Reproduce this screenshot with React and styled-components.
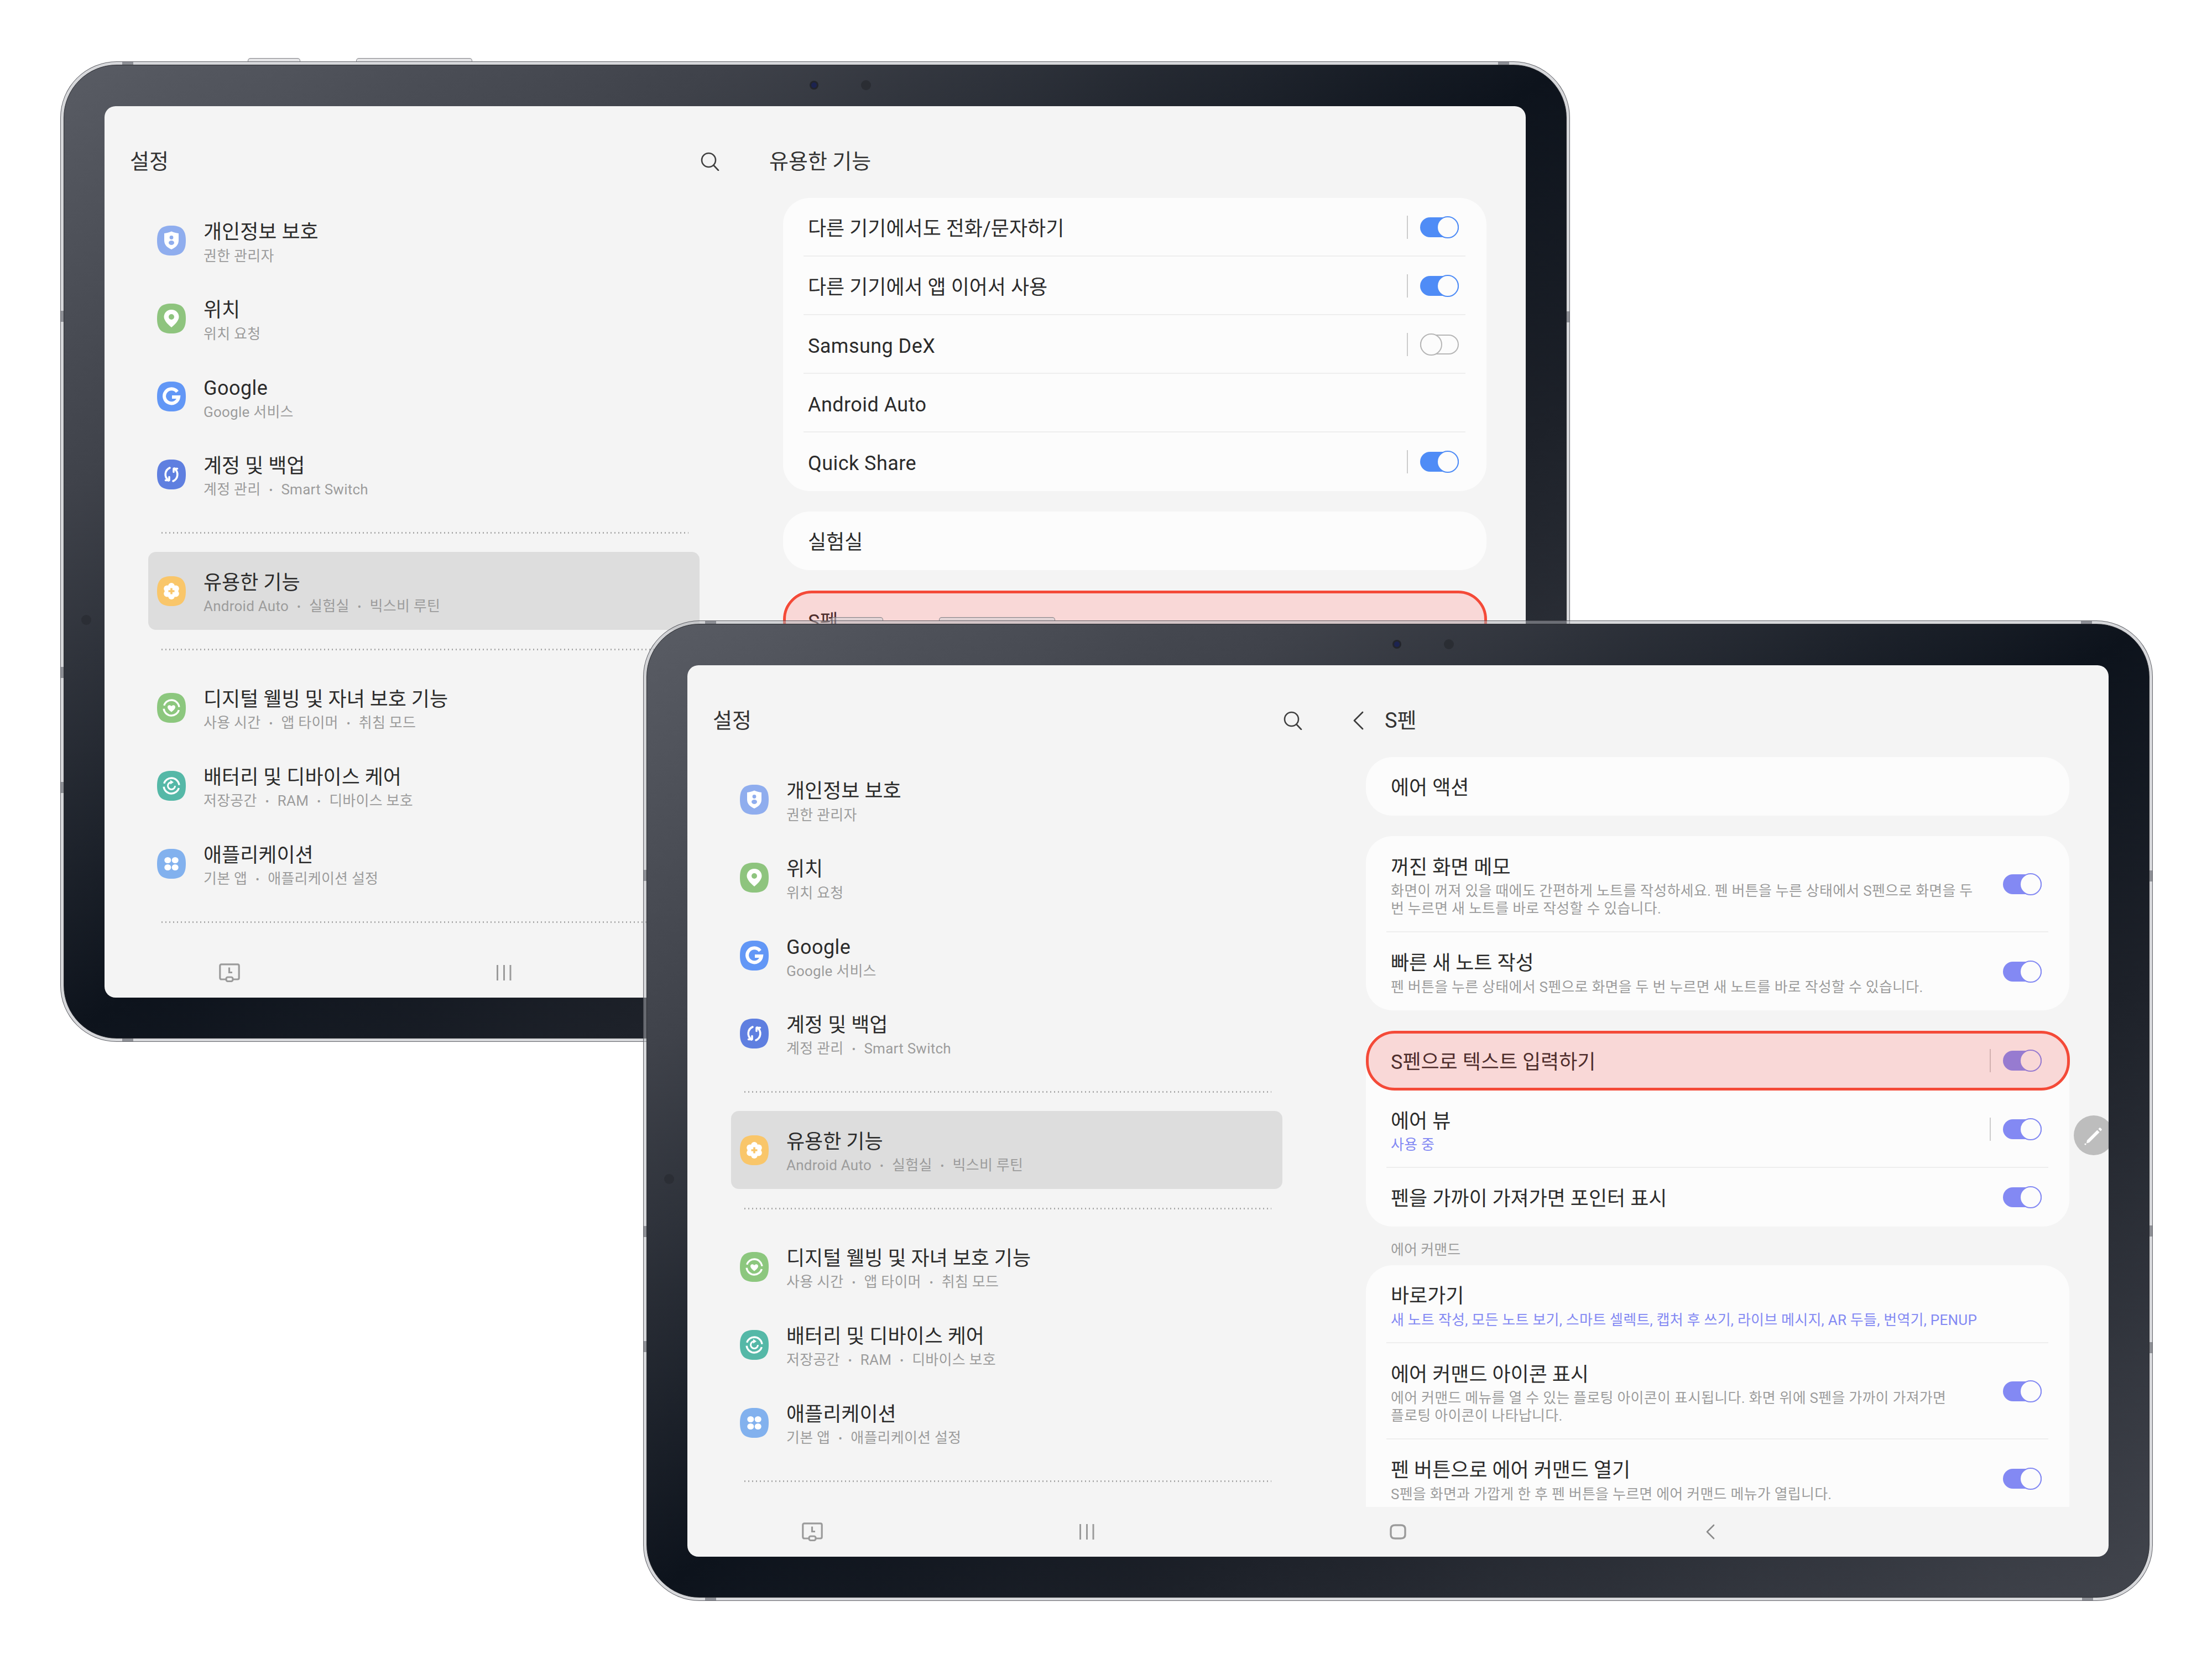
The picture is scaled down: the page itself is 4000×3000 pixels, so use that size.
import React from 'react';
import styled, { createGlobalStyle } from 'styled-components';

const FONT = 'Roboto, "Noto Sans CJK KR", sans-serif';

const Global = createGlobalStyle`
  html, body { margin: 0; padding: 0; background: #fff; }
  * { box-sizing: border-box; }
`;

const Canvas = styled.div`
  position: relative;
  width: 4000px;
  height: 3000px;
  overflow: hidden;
  background: #fff;
  font-family: ${FONT};
`;

const Device = styled.section`
  position: absolute;
  left: ${p => p.$x}px;
  top: ${p => p.$y}px;
  width: 2730px;
  height: 1773px;
  padding: 5px;
  border: 1px solid rgba(60, 62, 68, 0.75);
  border-radius: 102px;
  background: rgba(176, 177, 183, 0.5);
`;

const Body = styled.div`
  position: relative;
  width: 100%;
  height: 100%;
  padding: 74px 73px 73px;
  border-radius: 96px;
  border: 1px solid #2a2c31;
  background: linear-gradient(to bottom right, #595c64 0%, #3f424a 22%, #0d131c 50%, #1d2129 68%, #42454d 100%);
`;

const Screen = styled.div`
  position: relative;
  height: 100%;
  display: grid;
  grid-template-rows: 1522px 90px;
  background: #f4f4f4;
  border-radius: 20px;
  overflow: hidden;
`;

const Main = styled.div`
  display: grid;
  grid-template-columns: 1155px 1fr;
  min-height: 0;
  overflow: hidden;
`;

const Side = styled.aside`
  display: flex;
  flex-direction: column;
`;

const SideHeader = styled.header`
  display: flex;
  align-items: center;
  justify-content: space-between;
  height: 60px;
  margin: 70px 0 42px;
  padding: 0 43px 0 46px;
`;

const PaneHeader = styled.header`
  display: flex;
  align-items: center;
  gap: 37px;
  height: 60px;
  margin: 70px 0 36px -25px;
`;

const Heading = styled.h1`
  margin: 0;
  font-size: 38px;
  line-height: 60px;
  font-weight: 400;
  color: #333;
`;

const MenuList = styled.nav`
  display: flex;
  flex-direction: column;
  margin-left: 79px;
  width: 997px;
`;

const MenuRow = styled.div`
  display: flex;
  align-items: center;
  gap: 32px;
  height: 141px;
  padding-left: 16px;
  border-radius: 14px;
  background: ${p => (p.$active ? '#dddddd' : 'transparent')};
`;

const MenuDivider = styled.div`
  height: 3px;
  margin: 34px 20px 33px 24px;
  background: repeating-linear-gradient(90deg, #a9a9a9 0 2px, transparent 2px 7px);
`;

const TextBlock = styled.div`
  display: flex;
  flex-direction: column;
  padding-top: 6.5px;
  white-space: nowrap;
`;

const Title = styled.div`
  font-size: 36px;
  line-height: 46px;
  color: #2b2b2b;
  letter-spacing: ${p => (p.$latin ? '0.45px' : '0')};
`;

const Sub = styled.div`
  margin-top: 3.5px;
  font-size: 26px;
  line-height: 32px;
  letter-spacing: 0.25px;
  color: ${p => (p.$accent ? '#8389f3' : '#9c9c9c')};
`;

const Bullet = styled.span`
  margin: 0 15px;
  font-size: 20px;
  vertical-align: 1px;
`;

const Pane = styled.div`
  display: flex;
  flex-direction: column;
  padding: 0 71px 0 72px;
`;

const Card = styled.div`
  margin-bottom: ${p => (p.$flush ? 0 : 37)}px;
  padding-bottom: ${p => p.$tail || 0}px;
  background: #fcfcfc;
  border-radius: 48px;
  flex-shrink: 0;
`;

const Row = styled.div`
  position: relative;
  display: flex;
  align-items: center;
  justify-content: space-between;
  height: ${p => p.$h}px;
  padding: 0 50px 0 45px;

  ${p => p.$sep && `
    &::after {
      content: '';
      position: absolute;
      left: 37px;
      right: 38px;
      bottom: 0;
      height: 2px;
      background: #eeeeee;
    }
  `}
`;

const Highlight = styled.div`
  position: absolute;
  inset: 0 -1px 0 0;
  border: 5px solid #f44a38;
  border-radius: 52px;
  background: rgba(238, 66, 58, 0.19);
  pointer-events: none;
`;

const Controls = styled.div`
  display: flex;
  align-items: center;
  gap: 22px;
`;

const VLine = styled.span`
  width: 2px;
  height: 42px;
  background: #cccccc;
`;

const ToggleBox = styled.span`
  position: relative;
  display: flex;
  align-items: center;
  width: 70px;
  height: 42px;
`;

const Track = styled.span`
  width: 100%;
  height: 36px;
  border-radius: 18px;
  background: ${p => (p.$on ? p.$color : 'transparent')};
  border: ${p => (p.$on ? 'none' : '2px solid #b6b6b6')};
`;

const Thumb = styled.span`
  position: absolute;
  top: 1px;
  ${p => (p.$on ? 'right: 0;' : 'left: 0;')}
  width: 40px;
  height: 40px;
  border-radius: 50%;
  background: #fcfcfc;
  border: 2px solid ${p => (p.$on ? p.$color : '#b6b6b6')};
`;

const GroupLabel = styled.div`
  padding: 25px 0 11px 45px;
  font-size: 26px;
  line-height: 34px;
  color: #9c9c9c;
`;

const NavBar = styled.div`
  display: grid;
  grid-template-columns: 452px 540px 586px 544px;
  align-items: center;
  justify-items: center;
`;

const PenBubble = styled.div`
  position: absolute;
  left: 2507px;
  top: 814px;
  width: 72px;
  height: 72px;
  display: flex;
  align-items: center;
  justify-content: center;
  border-radius: 50%;
  background: #bdbdbd;
`;

const TopButton = styled.span`
  position: absolute;
  top: -7px;
  left: ${p => p.$x}px;
  width: ${p => p.$w}px;
  height: 6px;
  border: 1px solid rgba(110, 110, 116, 0.85);
  border-bottom: none;
  border-radius: 5px 5px 0 0;
  background: rgba(205, 205, 210, 0.55);
`;

const Notch = styled.span`
  position: absolute;
  background: #8d8f95;
  ${p => (p.$side === 'top' || p.$side === 'bottom'
    ? `width: 20px; height: 5px; left: ${p.$pos}px; ${p.$side}: 0;`
    : `width: 5px; height: 20px; top: ${p.$pos}px; ${p.$side}: 0;`)}
`;

const Lens = styled.span`
  position: absolute;
  left: ${p => p.$x}px;
  top: ${p => p.$y}px;
  width: ${p => p.$d}px;
  height: ${p => p.$d}px;
  border-radius: 50%;
  background: ${p => p.$bg};
  ${p => p.$ring && `box-shadow: 0 0 0 3px #23252c;`}
`;

const TileSvg = styled.svg`
  flex-shrink: 0;
`;

const Tile = ({ color, children }) => (
  <TileSvg width="52" height="54" viewBox="0 0 52 54">
    <path d="M26 0C44 0 52 7 52 27C52 47 44 54 26 54C8 54 0 47 0 27C0 7 8 0 26 0Z" fill={color} />
    {children}
  </TileSvg>
);

const PrivacyIcon = () => (
  <Tile color="#8fadee">
    <path d="M26 10.5C30 12.5 35 13.5 39 14V27C39 35 33 40 26 43C19 40 13 35 13 27V14C17 13.5 22 12.5 26 10.5Z" fill="#fff" />
    <circle cx="26" cy="21.5" r="3.4" fill="#8fadee" />
    <ellipse cx="26" cy="31" rx="5" ry="4" fill="#8fadee" />
  </Tile>
);
const PinIcon = () => (
  <Tile color="#8ec47e">
    <path d="M26 11C34 11 39.5 17 39.5 24C39.5 31 31 39 26 43C21 39 12.5 31 12.5 24C12.5 17 18 11 26 11Z" fill="#fff" />
    <circle cx="26" cy="24" r="5" fill="#8ec47e" />
  </Tile>
);
const GoogleIcon = () => (
  <Tile color="#6297f6">
    <path d="M36.5 18.5A13 13 0 1 0 39 28H27" fill="none" stroke="#fff" strokeWidth="6" />
  </Tile>
);
const SyncIcon = () => (
  <Tile color="#5f7fe0">
    <g fill="none" stroke="#fff" strokeWidth="3.6" strokeLinecap="round" strokeLinejoin="round">
      <path d="M23 15C14 19 12 31 21 38" />
      <path d="M15.5 37.5H22V31.5" />
      <path d="M29 39C38 35 40 23 31 16" />
      <path d="M36.5 16.5H30V22.5" />
    </g>
  </Tile>
);
const GearIcon = () => (
  <Tile color="#f9c66a">
    <g fill="#fff">
      <circle cx="26" cy="27" r="10" />
      <circle cx="26" cy="18" r="6" />
      <circle cx="26" cy="36" r="6" />
      <circle cx="18.2" cy="22.5" r="6" />
      <circle cx="33.8" cy="22.5" r="6" />
      <circle cx="18.2" cy="31.5" r="6" />
      <circle cx="33.8" cy="31.5" r="6" />
    </g>
    <path d="M26 21.5V32.5M20.5 27H31.5" stroke="#f9c66a" strokeWidth="3.6" />
  </Tile>
);
const WellbeingIcon = () => (
  <Tile color="#8cc77e">
    <circle cx="26" cy="27" r="14" fill="none" stroke="#fff" strokeWidth="3.4" strokeDasharray="38 6" strokeDashoffset="-4" />
    <path d="M26 34.5C21.5 31 19 28.5 19 25.5C19 22 23.5 21 26 24C28.5 21 33 22 33 25.5C33 28.5 30.5 31 26 34.5Z" fill="#fff" />
  </Tile>
);
const CareIcon = () => (
  <Tile color="#55b8a7">
    <circle cx="26" cy="27" r="14" fill="none" stroke="#fff" strokeWidth="3.4" strokeDasharray="38 6" strokeDashoffset="-4" />
    <path d="M26 20.5A6.5 6.5 0 1 0 32.5 27" fill="none" stroke="#fff" strokeWidth="3" />
    <path d="M24 16.5L30 20.5L24 24.5Z" fill="#fff" />
  </Tile>
);
const AppsIcon = () => (
  <Tile color="#82b1ee">
    <g fill="#fff">
      <ellipse cx="19.3" cy="20.5" rx="6" ry="5.6" />
      <ellipse cx="32.7" cy="20.5" rx="6" ry="5.6" />
      <ellipse cx="19.3" cy="33.5" rx="6" ry="5.6" />
      <ellipse cx="32.7" cy="33.5" rx="6" ry="5.6" />
    </g>
  </Tile>
);

const SearchIcon = () => (
  <svg width="34" height="34" viewBox="0 0 34 34" fill="none" stroke="#3f3f3f" strokeWidth="2.6" strokeLinecap="round">
    <circle cx="14.5" cy="14.5" r="12.5" />
    <path d="M23.6 24L32 33" />
  </svg>
);
const ChevronIcon = () => (
  <svg width="22" height="34" viewBox="0 0 22 34" fill="none" stroke="#3c3c3c" strokeWidth="2.8" strokeLinecap="round" strokeLinejoin="round">
    <path d="M19 2L4 17L19 32" />
  </svg>
);
const RecentIcon = () => (
  <svg width="38" height="34" viewBox="0 0 38 34" fill="none" stroke="#9b9b9b" strokeWidth="3.2">
    <path d="M13 29H4.5C2.8 29 1.8 28 1.8 26.3V4.5C1.8 2.8 2.8 1.8 4.5 1.8H33.5C35.2 1.8 36.2 2.8 36.2 4.5V26.3C36.2 28 35.2 29 33.5 29H25" />
    <rect x="13" y="25" width="12" height="7.5" rx="3" />
    <path d="M18.5 7.5V16.5H24" />
  </svg>
);
const LinesIcon = () => (
  <svg width="28" height="28" viewBox="0 0 28 28" fill="#9b9b9b">
    <rect x="1" width="3" height="28" />
    <rect x="13" width="3" height="28" />
    <rect x="24.5" width="3" height="28" />
  </svg>
);
const HomeIcon = () => (
  <svg width="30" height="28" viewBox="0 0 30 28" fill="none" stroke="#9b9b9b" strokeWidth="3.4">
    <path d="M10 2H20C25.5 2 28 4.5 28 9V19C28 23.5 25.5 26 20 26H10C4.5 26 2 23.5 2 19V9C2 4.5 4.5 2 10 2Z" />
  </svg>
);
const BackIcon = () => (
  <svg width="18" height="28" viewBox="0 0 18 28" fill="none" stroke="#8a8a8a" strokeWidth="2.6" strokeLinecap="round" strokeLinejoin="round">
    <path d="M15 2L3 14L15 26" />
  </svg>
);
const PenIcon = () => (
  <svg width="36" height="36" viewBox="0 0 36 36">
    <path d="M6 27L24.5 8.5L28.5 12.5L10 31L5 32.5Z" fill="#fff" />
    <path d="M26.5 6.5L28.5 4.5C29 4 29.7 4 30.2 4.5L32.5 6.8C33 7.3 33 8 32.5 8.5L30.5 10.5Z" fill="#fff" />
    <circle cx="3" cy="34" r="1.6" fill="#fff" />
  </svg>
);

const MENU_TOP = [
  { icon: PrivacyIcon, title: '개인정보 보호', sub: ['권한 관리자'] },
  { icon: PinIcon, title: '위치', sub: ['위치 요청'] },
  { icon: GoogleIcon, title: 'Google', latin: true, sub: ['Google 서비스'] },
  { icon: SyncIcon, title: '계정 및 백업', sub: ['계정 관리', 'Smart Switch'] },
];
const MENU_ACTIVE = { icon: GearIcon, title: '유용한 기능', sub: ['Android Auto', '실험실', '빅스비 루틴'] };
const MENU_BOTTOM = [
  { icon: WellbeingIcon, title: '디지털 웰빙 및 자녀 보호 기능', sub: ['사용 시간', '앱 타이머', '취침 모드'] },
  { icon: CareIcon, title: '배터리 및 디바이스 케어', sub: ['저장공간', 'RAM', '디바이스 보호'] },
  { icon: AppsIcon, title: '애플리케이션', sub: ['기본 앱', '애플리케이션 설정'] },
];

const MenuItem = ({ item, active }) => {
  const Icon = item.icon;
  return (
    <MenuRow $active={active}>
      <Icon />
      <TextBlock>
        <Title $latin={item.latin}>{item.title}</Title>
        <Sub>
          {item.sub.map((s, i) => (
            <React.Fragment key={s}>
              {i > 0 && <Bullet>•</Bullet>}
              {s}
            </React.Fragment>
          ))}
        </Sub>
      </TextBlock>
    </MenuRow>
  );
};

const Sidebar = () => (
  <Side>
    <SideHeader>
      <Heading>설정</Heading>
      <SearchIcon />
    </SideHeader>
    <MenuList>
      {MENU_TOP.map(m => <MenuItem key={m.title} item={m} />)}
      <MenuDivider />
      <MenuItem item={MENU_ACTIVE} active />
      <MenuDivider />
      {MENU_BOTTOM.map(m => <MenuItem key={m.title} item={m} />)}
      <MenuDivider />
    </MenuList>
  </Side>
);

const Toggle = ({ on, color }) => (
  <ToggleBox>
    <Track $on={on} $color={color} />
    <Thumb $on={on} $color={color} />
  </ToggleBox>
);

const SettingRow = ({ h, title, latin, sub, accent, toggle, off, vline, sep, color = '#8389f3', highlight }) => (
  <Row $h={h} $sep={sep}>
    <TextBlock>
      <Title $latin={latin}>{title}</Title>
      {sub && <Sub $accent={accent}>{sub}</Sub>}
    </TextBlock>
    {(toggle || vline) && (
      <Controls>
        {vline && <VLine />}
        {toggle && <Toggle on={!off} color={color} />}
      </Controls>
    )}
    {highlight && <Highlight />}
  </Row>
);

const FeaturesPane = () => (
  <Pane>
    <PaneHeader><Heading>유용한 기능</Heading></PaneHeader>
    <Card>
      <SettingRow h={106} sep title="다른 기기에서도 전화/문자하기" toggle vline color="#4f8cf6" />
      <SettingRow h={106} sep title="다른 기기에서 앱 이어서 사용" toggle vline color="#4f8cf6" />
      <SettingRow h={106} sep latin title="Samsung DeX" toggle off vline />
      <SettingRow h={106} sep latin title="Android Auto" />
      <SettingRow h={106} latin title="Quick Share" toggle vline color="#4f8cf6" />
    </Card>
    <Card><SettingRow h={106} title="실험실" /></Card>
    <Card><SettingRow h={108} title="S펜" highlight /></Card>
  </Pane>
);

const SPenPane = () => (
  <Pane>
    <PaneHeader>
      <ChevronIcon />
      <Heading>S펜</Heading>
    </PaneHeader>
    <Card><SettingRow h={106} title="에어 액션" /></Card>
    <Card>
      <SettingRow
        h={174}
        sep
        toggle
        title="꺼진 화면 메모"
        sub={<>화면이 꺼져 있을 때에도 간편하게 노트를 작성하세요. 펜 버튼을 누른 상태에서 S펜으로 화면을 두<br />번 누르면 새 노트를 바로 작성할 수 있습니다.</>}
      />
      <SettingRow h={141} toggle title="빠른 새 노트 작성" sub="펜 버튼을 누른 상태에서 S펜으로 화면을 두 번 누르면 새 노트를 바로 작성할 수 있습니다." />
    </Card>
    <Card $flush>
      <SettingRow h={108} title="S펜으로 텍스트 입력하기" toggle vline highlight />
      <SettingRow h={140} sep title="에어 뷰" sub="사용 중" accent toggle vline />
      <SettingRow h={106} title="펜을 가까이 가져가면 포인터 표시" toggle />
    </Card>
    <GroupLabel>에어 커맨드</GroupLabel>
    <Card $tail={60}>
      <SettingRow h={141} sep title="바로가기" accent sub="새 노트 작성, 모든 노트 보기, 스마트 셀렉트, 캡처 후 쓰기, 라이브 메시지, AR 두들, 번역기, PENUP" />
      <SettingRow
        h={174}
        sep
        toggle
        title="에어 커맨드 아이콘 표시"
        sub={<>에어 커맨드 메뉴를 열 수 있는 플로팅 아이콘이 표시됩니다. 화면 위에 S펜을 가까이 가져가면<br />플로팅 아이콘이 나타납니다.</>}
      />
      <SettingRow h={141} toggle title="펜 버튼으로 에어 커맨드 열기" sub="S펜을 화면과 가깝게 한 후 펜 버튼을 누르면 에어 커맨드 메뉴가 열립니다." />
    </Card>
  </Pane>
);

const NOTCHES = [
  ['top', 111], ['top', 2599], ['bottom', 111], ['bottom', 2601],
  ['left', 450], ['left', 1094], ['left', 1302],
  ['right', 451], ['right', 1093], ['right', 1304],
];

const Tablet = ({ x, y, pane, pen }) => (
  <Device $x={x} $y={y}>
    <TopButton $x={338} $w={95} />
    <TopButton $x={534} $w={210} />
    {NOTCHES.map(([side, pos]) => <Notch key={side + pos} $side={side} $pos={pos} />)}
    <Body>
      <Lens $x={1351} $y={31} $d={10} $bg="#1c2350" $ring />
      <Lens $x={1441} $y={27} $d={18} $bg="#2a2d33" />
      <Lens $x={31} $y={994} $d={18} $bg="#2b2e35" />
      <Screen>
        <Main>
          <Sidebar />
          {pane}
        </Main>
        <NavBar>
          <RecentIcon />
          <LinesIcon />
          <HomeIcon />
          <BackIcon />
        </NavBar>
        {pen && <PenBubble><PenIcon /></PenBubble>}
      </Screen>
    </Body>
  </Device>
);

export default function App() {
  return (
    <Canvas>
      <Global />
      <Tablet x={109} y={111} pane={<FeaturesPane />} />
      <Tablet x={1163} y={1122} pane={<SPenPane />} pen />
    </Canvas>
  );
}
